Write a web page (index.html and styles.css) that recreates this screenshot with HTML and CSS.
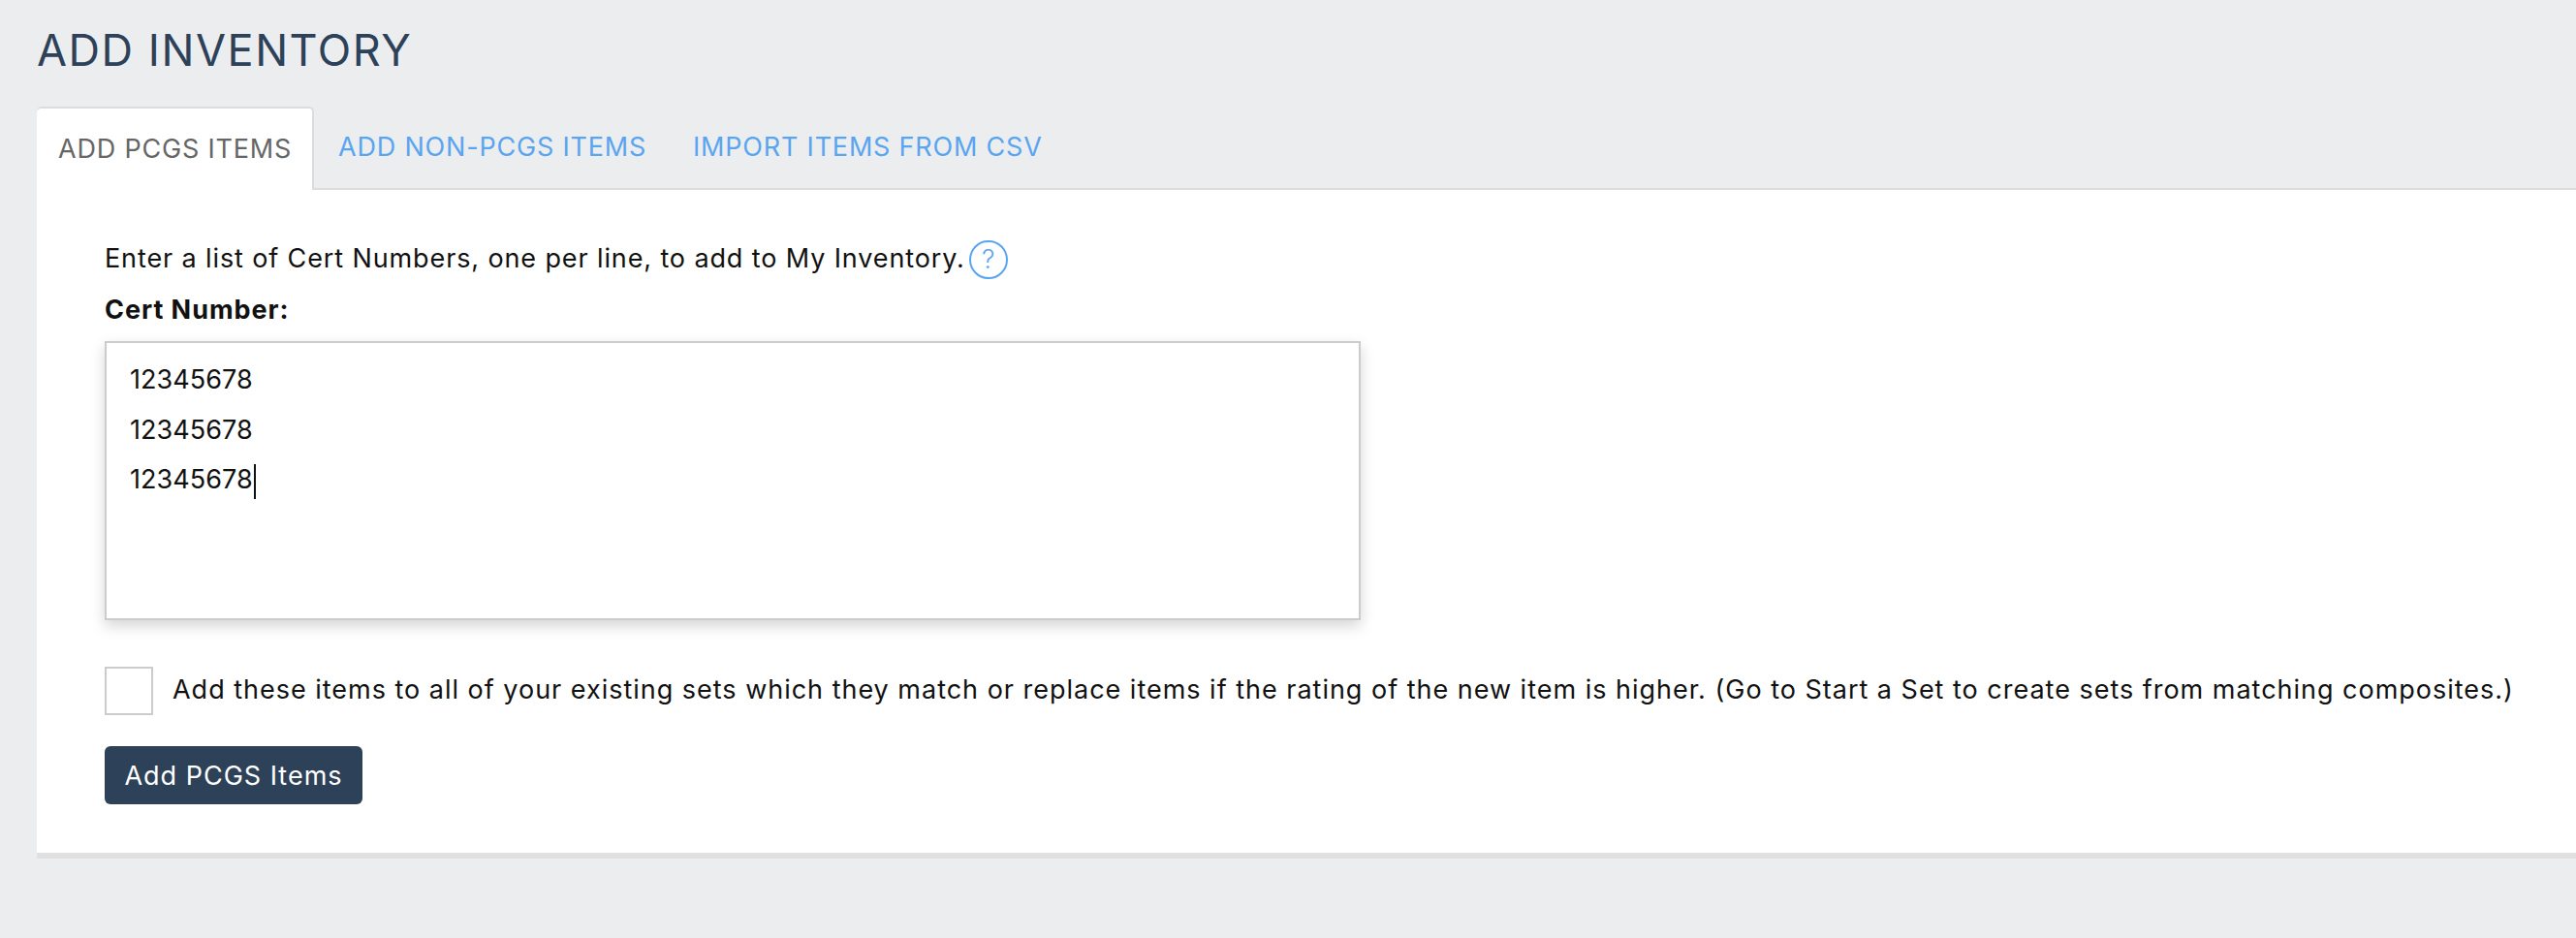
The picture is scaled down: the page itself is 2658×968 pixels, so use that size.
FILE: index.html
```html
<!DOCTYPE html>
<html lang="en">
<head>
<meta charset="utf-8">
<title>Add Inventory</title>
<link rel="stylesheet" href="styles.css">
</head>
<body>
<main class="page">
  <h1 class="title">ADD INVENTORY</h1>
  <nav class="tabs">
    <a class="tab tab-active">ADD PCGS ITEMS</a>
    <a class="tab">ADD NON-PCGS ITEMS</a>
    <a class="tab">IMPORT ITEMS FROM CSV</a>
  </nav>
  <section class="panel">
    <p class="intro">Enter a list of Cert Numbers, one per line, to add to My Inventory.<span class="help">?</span></p>
    <label class="field-label">Cert Number:</label>
    <div class="cert-box">
      <div class="cert-line">12345678</div>
      <div class="cert-line">12345678</div>
      <div class="cert-line">12345678<span class="caret"></span></div>
    </div>
    <div class="check-row">
      <span class="check"></span>
      <span class="check-text">Add these items to all of your existing sets which they match or replace items if the rating of the new item is higher. (Go to Start a Set to create sets from matching composites.)</span>
    </div>
    <button class="submit">Add PCGS Items</button>
  </section>
</main>
</body>
</html>
```
FILE: styles.css
```css
* { box-sizing: border-box; }
html, body { margin: 0; padding: 0; }
body {
  width: 2658px;
  height: 968px;
  overflow: hidden;
  background: #ecedef;
  color: #111;
  font-family: Inter, "Liberation Sans", sans-serif;
  font-size: 27px;
  letter-spacing: 0.9px;
}
.page { padding: 0 0 0 38px; }
.title {
  margin: 0;
  padding-top: 25px;
  height: 110px;
  font-size: 45px;
  letter-spacing: 1.55px;
  line-height: 54px;
  font-weight: 400;
  color: #2d4159;
}
.tabs {
  display: flex;
  height: 86px;
  gap: 4px;
  border-bottom: 2px solid #dcdcdc;
}
.tab {
  padding: 0 22px;
  height: 86px;
  line-height: 84px;
  font-size: 27px;
  letter-spacing: 0.8px;
  color: #5aa5ef;
}
.tab-active {
  background: #fff;
  color: #666;
  padding-right: 21px;
  margin-right: -1px;
  border-top: 2px solid #dcdcdc;
  border-right: 2px solid #dcdcdc;
  border-radius: 5px 5px 0 0;
}
.panel {
  background: #fff;
  height: 690px;
  padding: 52px 0 0 70px;
  border-bottom: 6px solid #e0e0e0;
}
.intro {
  margin: 0;
  height: 40px;
  display: flex;
  align-items: flex-start;
  line-height: 38px;
  letter-spacing: 0.88px;
}
.help {
  margin-left: 4px;
  width: 40px;
  height: 40px;
  border: 2px solid #5aa5ef;
  border-radius: 50%;
  color: #5aa5ef;
  font-size: 27px;
  font-weight: 300;
  letter-spacing: 0;
  line-height: 36px;
  text-align: center;
}
.field-label {
  display: block;
  margin-top: 14px;
  height: 36px;
  line-height: 36px;
  font-weight: 700;
  letter-spacing: 0.95px;
}
.cert-box {
  margin-top: 14px;
  width: 1296px;
  height: 288px;
  padding: 12px 24px;
  border: 2px solid #ccc;
  box-shadow: 0 6px 14px rgba(0, 0, 0, .17);
  letter-spacing: 0.05px;
}
.cert-line { height: 51.7px; line-height: 51.7px; }
.caret {
  display: inline-block;
  width: 2px;
  height: 36px;
  margin-left: 1px;
  background: #111;
  vertical-align: middle;
}
.check-row {
  margin-top: 48px;
  display: flex;
  align-items: center;
  gap: 20px;
  white-space: nowrap;
  letter-spacing: 0.985px;
}
.check {
  width: 50px;
  height: 50px;
  border: 2px solid #ccc;
  flex: none;
}
.check-text { padding-bottom: 4px; }
.submit {
  display: block;
  margin-top: 32px;
  width: 266px;
  height: 60px;
  background: #2d4159;
  border: 0;
  border-radius: 6px;
  color: #fff;
  font: inherit;
  letter-spacing: 1px;
  padding: 0;
}
```
